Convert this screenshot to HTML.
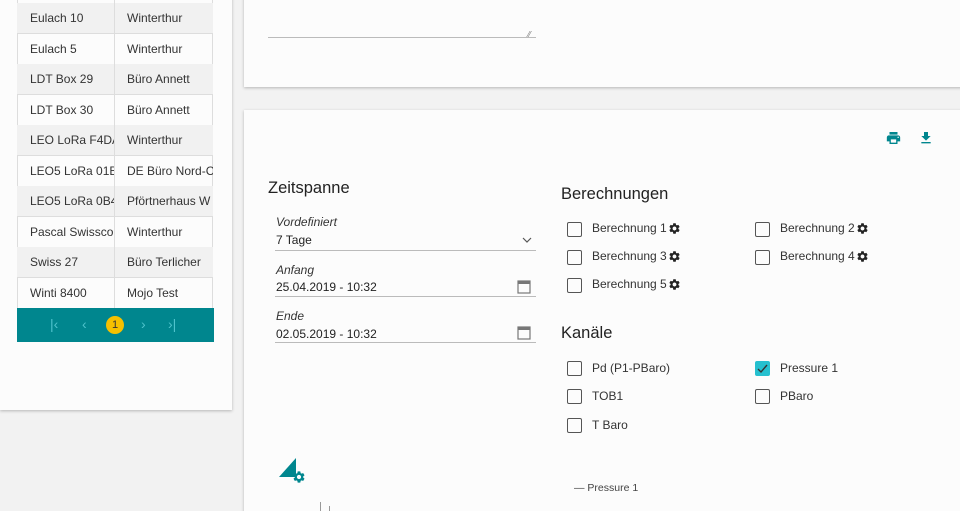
<!DOCTYPE html><html><head><meta charset="utf-8"><style>
*{margin:0;padding:0;box-sizing:border-box}
html,body{width:960px;height:511px;overflow:hidden}
body{background:#f2f2f2;font-family:"Liberation Sans",sans-serif;position:relative;color:#333}
.a{position:absolute}
.card{position:absolute;background:#fcfcfc;box-shadow:0 1px 3px rgba(0,0,0,.25)}
.row{position:absolute;left:17px;width:196px;height:31px;border-bottom:1px solid #ddd;font-size:12px;color:#333}
.row span{position:absolute;top:8px}
.row .c1{left:13px;width:84px;overflow:hidden;white-space:nowrap}
.row .c2{left:110px;width:86px;overflow:hidden;white-space:nowrap}
.g{background:#f1f1f1}
.lbl{font-style:italic;font-size:12px;color:#333}
.val{font-size:12px;color:#222}
.line{height:1px;background:#bbb}
.cb{position:absolute;width:15px;height:15px;border:1.6px solid #555;border-radius:2px}
.cl{position:absolute;font-size:12px;color:#333;display:flex;align-items:center}
.cl svg{margin-left:1px}
h3{position:absolute;font-weight:normal;font-size:16.5px;color:#222}
</style></head><body>
<svg width="0" height="0" style="position:absolute"><defs><path id="gp" d="M19.14 12.94c.04-.3.06-.61.06-.94 0-.32-.02-.64-.07-.94l2.03-1.58a.49.49 0 0 0 .12-.61l-1.92-3.32a.488.488 0 0 0-.59-.22l-2.39.96c-.5-.38-1.030-.7-1.62-.94l-.36-2.54a.484.484 0 0 0-.48-.41h-3.84c-.24 0-.43.17-.47.41l-.36 2.54c-.59.24-1.13.57-1.62.94l-2.39-.96c-.22-.08-.47 0-.59.22L2.74 8.87c-.12.21-.08.47.12.61l2.03 1.58c-.05.3-.09.63-.09.94s.02.64.07.94l-2.03 1.58a.49.49 0 0 0-.12.61l1.92 3.32c.12.22.37.29.59.22l2.39-.96c.5.38 1.03.7 1.62.94l.36 2.54c.05.24.24.41.48.41h3.84c.24 0 .44-.17.47-.41l.36-2.54c.59-.24 1.13-.56 1.62-.94l2.39.96c.22.08.47 0 .59-.22l1.92-3.32c.12-.22.07-.47-.12-.61l-2.01-1.58zM12 15.6c-1.98 0-3.6-1.62-3.6-3.6s1.62-3.6 3.6-3.6 3.6 1.62 3.6 3.6-1.62 3.6-3.6 3.6z"/></defs></svg>
<div class="card" style="left:0;top:-5px;width:232px;height:415px"></div>
<div class="a" style="left:17px;top:0;width:196px;height:308px;border-left:1px solid #ddd;border-right:1px solid #ddd"></div>
<div class="row g" style="top:3px"><span class="c1">Eulach 10</span><span class="c2">Winterthur</span></div>
<div class="row" style="top:34px"><span class="c1">Eulach 5</span><span class="c2">Winterthur</span></div>
<div class="row g" style="top:64px"><span class="c1">LDT Box 29</span><span class="c2">Büro Annett</span></div>
<div class="row" style="top:95px"><span class="c1">LDT Box 30</span><span class="c2">Büro Annett</span></div>
<div class="row g" style="top:125px"><span class="c1">LEO LoRa F4DA</span><span class="c2">Winterthur</span></div>
<div class="row" style="top:156px"><span class="c1">LEO5 LoRa 01B</span><span class="c2">DE Büro Nord-C</span></div>
<div class="row g" style="top:186px"><span class="c1">LEO5 LoRa 0B4</span><span class="c2">Pförtnerhaus W</span></div>
<div class="row" style="top:217px"><span class="c1">Pascal Swissco</span><span class="c2">Winterthur</span></div>
<div class="row g" style="top:247px"><span class="c1">Swiss 27</span><span class="c2">Büro Terlicher</span></div>
<div class="row" style="top:278px"><span class="c1">Winti 8400</span><span class="c2">Mojo Test</span></div>
<div class="a" style="left:114px;top:0;width:1px;height:308px;background:#ddd"></div>
<div class="a" style="left:17px;top:308px;width:197px;height:34px;background:#00868e;color:#4fc3cc;font-size:14px">
<span class="a" style="left:33px;top:8px">|‹</span><span class="a" style="left:65px;top:8px">‹</span>
<span class="a" style="left:89px;top:8px;width:18px;height:18px;border-radius:50%;background:#f6c000;color:#333;font-size:11px;text-align:center;line-height:18px">1</span>
<span class="a" style="left:124px;top:8px">›</span><span class="a" style="left:151px;top:8px">›|</span></div>

<div class="card" style="left:244px;top:-5px;width:720px;height:92px"></div>
<div class="a line" style="left:268px;top:37px;width:268px"></div>
<div class="a" style="left:528px;top:30px;font-size:8px;color:#777">⁄⁄</div>

<div class="card" style="left:244px;top:110px;width:720px;height:410px"></div>
<svg class="a" style="left:885px;top:130px" width="17" height="16" viewBox="0 0 24 24"><path fill="#00868e" d="M19 8H5c-1.66 0-3 1.34-3 3v6h4v4h12v-4h4v-6c0-1.660-1.34-3-3-3zm-3 11H8v-5h8v5zm3-7c-.55 0-1-.45-1-1s.45-1 1-1 1 .45 1 1-.45 1-1 1zm-1-9H6v4h12V3z"/></svg>
<svg class="a" style="left:918px;top:130px" width="16" height="16" viewBox="0 0 24 24"><path fill="#00868e" d="M19 9h-4V3H9v6H5l7 7 7-7zM5 18v2h14v-2H5z"/></svg>

<h3 style="left:268px;top:179px">Zeitspanne</h3>
<div class="a lbl" style="left:276px;top:215px">Vordefiniert</div>
<div class="a val" style="left:276px;top:233px">7 Tage</div>
<svg class="a" style="left:522px;top:237px" width="10" height="7" viewBox="0 0 10 7"><path d="M1 1l4 4 4-4" fill="none" stroke="#555" stroke-width="1.2"/></svg>
<div class="a line" style="left:275px;top:250px;width:261px"></div>
<div class="a lbl" style="left:276px;top:263px">Anfang</div>
<div class="a val" style="left:276px;top:280px">25.04.2019 - 10:32</div>
<div class="a line" style="left:275px;top:296px;width:261px"></div>
<div class="a lbl" style="left:276px;top:309px">Ende</div>
<div class="a val" style="left:276px;top:327px">02.05.2019 - 10:32</div>
<div class="a line" style="left:275px;top:342px;width:261px"></div>
<svg class="a" style="left:517px;top:279px" width="14" height="15" viewBox="0 0 14 15"><rect x="1" y="2" width="12" height="12" fill="none" stroke="#777" stroke-width="1.2"/><rect x="1" y="2" width="12" height="3" fill="#777"/></svg>
<svg class="a" style="left:517px;top:325px" width="14" height="15" viewBox="0 0 14 15"><rect x="1" y="2" width="12" height="12" fill="none" stroke="#777" stroke-width="1.2"/><rect x="1" y="2" width="12" height="3" fill="#777"/></svg>

<h3 style="left:561px;top:185px">Berechnungen</h3>
<div class="cb" style="left:567px;top:222px"></div><div class="cl" style="left:592px;top:221px">Berechnung 1<svg width="13" height="13" viewBox="0 0 24 24"><use href="#gp" fill="#222"/></svg></div>
<div class="cb" style="left:755px;top:222px"></div><div class="cl" style="left:780px;top:221px">Berechnung 2<svg width="13" height="13" viewBox="0 0 24 24"><use href="#gp" fill="#222"/></svg></div>
<div class="cb" style="left:567px;top:250px"></div><div class="cl" style="left:592px;top:249px">Berechnung 3<svg width="13" height="13" viewBox="0 0 24 24"><use href="#gp" fill="#222"/></svg></div>
<div class="cb" style="left:755px;top:250px"></div><div class="cl" style="left:780px;top:249px">Berechnung 4<svg width="13" height="13" viewBox="0 0 24 24"><use href="#gp" fill="#222"/></svg></div>
<div class="cb" style="left:567px;top:278px"></div><div class="cl" style="left:592px;top:277px">Berechnung 5<svg width="13" height="13" viewBox="0 0 24 24"><use href="#gp" fill="#222"/></svg></div>

<h3 style="left:561px;top:324px">Kanäle</h3>
<div class="cb" style="left:567px;top:361px"></div><div class="cl" style="left:592px;top:361px">Pd (P1-PBaro)</div>
<div class="cb" style="left:755px;top:361px;background:#26c0cf;border-color:#26c0cf"></div>
<svg class="a" style="left:756px;top:362px" width="13" height="13" viewBox="0 0 13 13"><path d="M2 7l3 3 6-7" fill="none" stroke="#333" stroke-width="1.4"/></svg>
<div class="cl" style="left:780px;top:361px">Pressure 1</div>
<div class="cb" style="left:567px;top:389px"></div><div class="cl" style="left:592px;top:389px">TOB1</div>
<div class="cb" style="left:755px;top:389px"></div><div class="cl" style="left:780px;top:389px">PBaro</div>
<div class="cb" style="left:567px;top:418px"></div><div class="cl" style="left:592px;top:418px">T Baro</div>

<svg class="a" style="left:278px;top:454px" width="30" height="30" viewBox="0 0 30 30"><path d="M1 23L18 4V23Z" fill="#00868e"/></svg>
<svg class="a" style="left:292px;top:470px" width="14" height="14" viewBox="0 0 24 24"><use href="#gp" fill="#00868e"/></svg>
<div class="a" style="left:574px;top:482px;font-size:10.5px;color:#444">— Pressure 1</div>
<div class="a" style="left:320px;top:502px;width:1px;height:9px;background:#999"></div>
<div class="a" style="left:329px;top:506px;width:1px;height:5px;background:#999"></div>
</body></html>
